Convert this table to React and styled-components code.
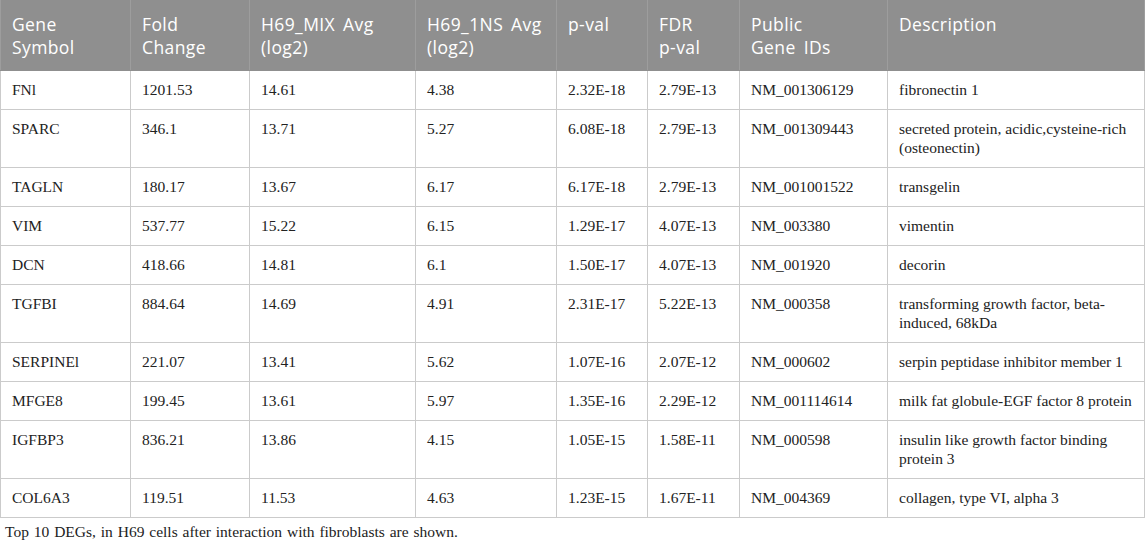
import React from "react";
import styled, { createGlobalStyle } from "styled-components";

const GlobalStyle = createGlobalStyle`
  html, body {
    margin: 0;
    padding: 0;
    background: #fff;
  }
`;

const columns = [
  { label: ["Gene", "Symbol"], width: 130 },
  { label: ["Fold", "Change"], width: 119 },
  { label: ["H69_MIX Avg", "(log2)"], width: 166 },
  { label: ["H69_1NS Avg", "(log2)"], width: 141 },
  { label: ["p-val"], width: 91 },
  { label: ["FDR", "p-val"], width: 92 },
  { label: ["Public", "Gene IDs"], width: 148 },
  { label: ["Description"], width: 257 },
];

const rows = [
  ["FNl", "1201.53", "14.61", "4.38", "2.32E-18", "2.79E-13", "NM_001306129", "fibronectin 1"],
  ["SPARC", "346.1", "13.71", "5.27", "6.08E-18", "2.79E-13", "NM_001309443", "secreted protein, acidic,cysteine-rich (osteonectin)"],
  ["TAGLN", "180.17", "13.67", "6.17", "6.17E-18", "2.79E-13", "NM_001001522", "transgelin"],
  ["VIM", "537.77", "15.22", "6.15", "1.29E-17", "4.07E-13", "NM_003380", "vimentin"],
  ["DCN", "418.66", "14.81", "6.1", "1.50E-17", "4.07E-13", "NM_001920", "decorin"],
  ["TGFBI", "884.64", "14.69", "4.91", "2.31E-17", "5.22E-13", "NM_000358", "transforming growth factor, beta-induced, 68kDa"],
  ["SERPINEl", "221.07", "13.41", "5.62", "1.07E-16", "2.07E-12", "NM_000602", "serpin peptidase inhibitor member 1"],
  ["MFGE8", "199.45", "13.61", "5.97", "1.35E-16", "2.29E-12", "NM_001114614", "milk fat globule-EGF factor 8 protein"],
  ["IGFBP3", "836.21", "13.86", "4.15", "1.05E-15", "1.58E-11", "NM_000598", "insulin like growth factor binding protein 3"],
  ["COL6A3", "119.51", "11.53", "4.63", "1.23E-15", "1.67E-11", "NM_004369", "collagen, type VI, alpha 3"],
];

const Table = styled.table`
  width: 1144px;
  table-layout: fixed;
  border-collapse: collapse;
  border-spacing: 0;
`;

const HeadCell = styled.th`
  background: #8f8f8f;
  color: #fff;
  font-family: "Open Sans", "Liberation Sans", sans-serif;
  font-weight: 400;
  font-size: 17.5px;
  letter-spacing: 0.4px;
  word-spacing: 3px;
  line-height: 23px;
  text-align: left;
  vertical-align: top;
  padding: 13px 6px 11px 11px;
  border: 1px solid #9d9d9d;
  border-top: none;
  border-bottom: 1px solid #8f8f8f;
`;

const Cell = styled.td`
  font-family: "Liberation Serif", "Times New Roman", serif;
  font-size: 15.5px;
  line-height: 19px;
  color: #222;
  vertical-align: top;
  padding: 9px 4px 10px 11px;
  border: 1px solid #cbcbcb;
`;

const Caption = styled.p`
  margin: 4px 0 0 5px;
  font-family: "Liberation Serif", "Times New Roman", serif;
  font-size: 15.5px;
  word-spacing: 1px;
  line-height: 19px;
  color: #222;
`;

export default function App() {
  return (
    <>
      <GlobalStyle />
      <Table>
        <colgroup>
          {columns.map((c, i) => (
            <col key={i} style={{ width: c.width }} />
          ))}
        </colgroup>
        <thead>
          <tr>
            {columns.map((c, i) => (
              <HeadCell key={i}>
                {c.label.map((l, j) => (
                  <div key={j}>{l}</div>
                ))}
              </HeadCell>
            ))}
          </tr>
        </thead>
        <tbody>
          {rows.map((r, i) => (
            <tr key={i}>
              {r.map((v, j) => (
                <Cell key={j}>{v}</Cell>
              ))}
            </tr>
          ))}
        </tbody>
      </Table>
      <Caption>Top 10 DEGs, in H69 cells after interaction with fibroblasts are shown.</Caption>
    </>
  );
}
